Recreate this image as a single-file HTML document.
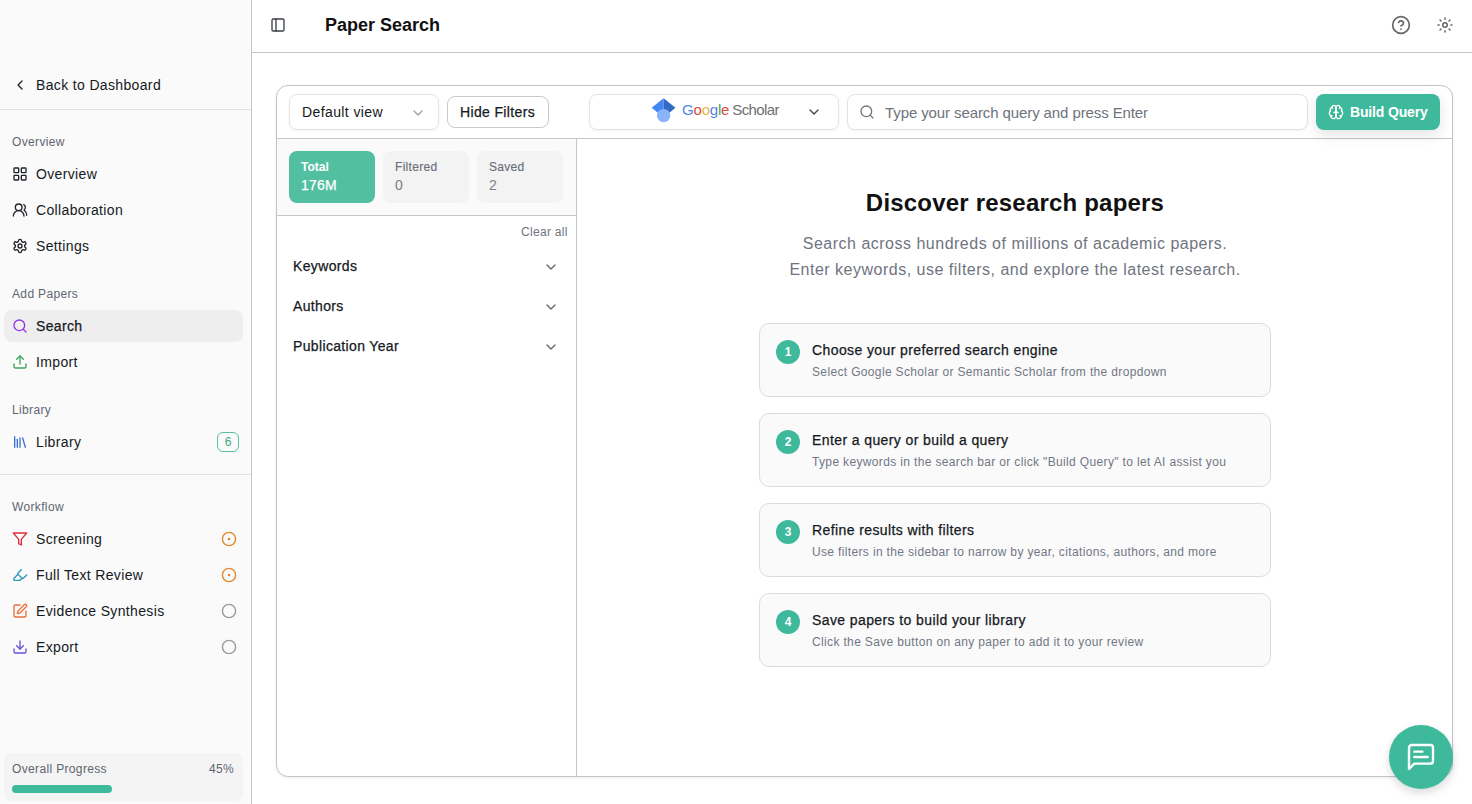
<!DOCTYPE html>
<html><head><meta charset="utf-8">
<style>
*{box-sizing:border-box;margin:0;padding:0}
html,body{width:1472px;height:804px;overflow:hidden;background:#fff;font-family:"Liberation Sans",sans-serif;color:#151922}
.abs{position:absolute}
.med{-webkit-text-stroke:.25px currentColor}
svg{display:block}
.ic{position:absolute;fill:none;stroke:currentColor;stroke-width:2;stroke-linecap:round;stroke-linejoin:round}
#sb{position:absolute;left:0;top:0;width:252px;height:804px;background:#fafafa;border-right:1px solid #c6c6c6}
.t{position:absolute;white-space:nowrap;line-height:1}
.lbl{font-size:12px;color:#5f6672;letter-spacing:.35px}
.itm{font-size:14px;color:#151922;letter-spacing:.35px}
.hr{position:absolute;left:0;width:251px;height:1px;background:#e2e2e2}
#hd{position:absolute;left:252px;top:0;width:1220px;height:53px;border-bottom:1px solid #c6c6c6;background:#fff}
#card{position:absolute;left:276px;top:85px;width:1177px;height:692px;border:1px solid #c4c4c4;border-radius:12px;background:#fff;box-shadow:0 1px 3px rgba(0,0,0,.07);overflow:hidden}
.box{position:absolute;border:1px solid #e3e3e3;border-radius:8px;background:#fff;box-shadow:0 1px 2px rgba(0,0,0,.05)}
.stat{position:absolute;top:12px;width:86px;height:52px;border-radius:8px;background:#f3f3f3}
.step{position:absolute;left:181px;width:512px;height:74px;border:1px solid #dcdcdc;border-radius:10px;background:#fafafa}
.num{position:absolute;left:16px;top:16px;width:24px;height:24px;border-radius:12px;background:#3fb99b;color:#fff;font-size:12px;font-weight:700;text-align:center;line-height:24px}
.st{-webkit-text-stroke:.25px currentColor;position:absolute;left:52px;top:19px;font-size:14px;color:#151922;letter-spacing:.4px;white-space:nowrap;line-height:1}
.sd{position:absolute;left:52px;top:42px;font-size:12px;color:#717784;letter-spacing:.35px;white-space:nowrap;line-height:1}
</style></head><body>

<!-- SIDEBAR -->
<div id="sb">
  <svg class="ic" style="left:12px;top:77px;color:#1f2330" width="16" height="16" viewBox="0 0 24 24"><path d="m15 18-6-6 6-6"/></svg>
  <div class="t itm" style="left:36px;top:78px">Back to Dashboard</div>
  <div class="hr" style="top:109px"></div>

  <div class="t lbl" style="left:12px;top:136px">Overview</div>
  <svg class="ic" style="left:12px;top:166px;color:#1f232b" width="16" height="16" viewBox="0 0 24 24"><rect x="3" y="3" width="7" height="7" rx="1"/><rect x="14" y="3" width="7" height="7" rx="1"/><rect x="14" y="14" width="7" height="7" rx="1"/><rect x="3" y="14" width="7" height="7" rx="1"/></svg>
  <div class="t itm" style="left:36px;top:167px">Overview</div>
  <svg class="ic" style="left:12px;top:202px;color:#1f232b" width="16" height="16" viewBox="0 0 24 24"><path d="M18 21a8 8 0 0 0-16 0"/><circle cx="10" cy="8" r="5"/><path d="M22 20c0-3.37-2-6.5-4-8a5 5 0 0 0-.45-8.3"/></svg>
  <div class="t itm" style="left:36px;top:203px">Collaboration</div>
  <svg class="ic" style="left:12px;top:238px;color:#1f232b" width="16" height="16" viewBox="0 0 24 24"><path d="M12.22 2h-.44a2 2 0 0 0-2 2v.18a2 2 0 0 1-1 1.73l-.43.25a2 2 0 0 1-2 0l-.15-.08a2 2 0 0 0-2.73.73l-.22.38a2 2 0 0 0 .73 2.73l.15.1a2 2 0 0 1 1 1.72v.51a2 2 0 0 1-1 1.74l-.15.09a2 2 0 0 0-.73 2.73l.22.38a2 2 0 0 0 2.73.73l.15-.08a2 2 0 0 1 2 0l.43.25a2 2 0 0 1 1 1.73V20a2 2 0 0 0 2 2h.44a2 2 0 0 0 2-2v-.18a2 2 0 0 1 1-1.73l.43-.25a2 2 0 0 1 2 0l.15.08a2 2 0 0 0 2.73-.73l.22-.39a2 2 0 0 0-.73-2.73l-.15-.08a2 2 0 0 1-1-1.74v-.5a2 2 0 0 1 1-1.74l.15-.09a2 2 0 0 0 .73-2.73l-.22-.38a2 2 0 0 0-2.73-.73l-.15.08a2 2 0 0 1-2 0l-.43-.25a2 2 0 0 1-1-1.73V4a2 2 0 0 0-2-2z"/><circle cx="12" cy="12" r="3"/></svg>
  <div class="t itm" style="left:36px;top:239px">Settings</div>

  <div class="t lbl" style="left:12px;top:288px">Add Papers</div>
  <div class="abs" style="left:4px;top:310px;width:239px;height:32px;border-radius:8px;background:#eeeeee"></div>
  <svg class="ic" style="left:12px;top:318px;color:#9333ea" width="16" height="16" viewBox="0 0 24 24"><circle cx="11" cy="11" r="8"/><path d="m21 21-4.3-4.3"/></svg>
  <div class="t itm med" style="left:36px;top:319px">Search</div>
  <svg class="ic" style="left:12px;top:354px;color:#3aa55d" width="16" height="16" viewBox="0 0 24 24"><path d="M21 15v4a2 2 0 0 1-2 2H5a2 2 0 0 1-2-2v-4"/><polyline points="17 8 12 3 7 8"/><line x1="12" y1="3" x2="12" y2="15"/></svg>
  <div class="t itm" style="left:36px;top:355px">Import</div>

  <div class="t lbl" style="left:12px;top:404px">Library</div>
  <svg class="ic" style="left:12px;top:434px;color:#3b6fd8" width="16" height="16" viewBox="0 0 24 24"><path d="m16 6 4 14"/><path d="M12 6v14"/><path d="M8 8v12"/><path d="M4 4v16"/></svg>
  <div class="t itm" style="left:36px;top:435px">Library</div>
  <div class="abs" style="left:217px;top:432px;width:22px;height:20px;border:1px solid #59bfa3;border-radius:6px;color:#3fa88b;font-size:12px;text-align:center;line-height:18px">6</div>
  <div class="hr" style="top:474px"></div>

  <div class="t lbl" style="left:12px;top:501px">Workflow</div>
  <svg class="ic" style="left:12px;top:531px;color:#dc2f3a" width="16" height="16" viewBox="0 0 24 24"><polygon points="22 3 2 3 10 12.46 10 19 14 21 14 12.46 22 3"/></svg>
  <div class="t itm" style="left:36px;top:532px">Screening</div>
  <svg class="ic" style="left:12px;top:567px;color:#2a98b8" width="16" height="16" viewBox="0 0 24 24"><path d="m9 11-6 6v3h9l3-3"/><path d="m22 12-4.6 4.6a2 2 0 0 1-2.8 0l-5.2-5.2a2 2 0 0 1 0-2.8L14 4"/></svg>
  <div class="t itm" style="left:36px;top:568px">Full Text Review</div>
  <svg class="ic" style="left:12px;top:603px;color:#e8703a" width="16" height="16" viewBox="0 0 24 24"><path d="M12 3H5a2 2 0 0 0-2 2v14a2 2 0 0 0 2 2h14a2 2 0 0 0 2-2v-7"/><path d="M18.375 2.625a1 1 0 0 1 3 3l-9.013 9.014a2 2 0 0 1-.853.505l-2.873.84a.5.5 0 0 1-.62-.62l.84-2.873a2 2 0 0 1 .506-.852z"/></svg>
  <div class="t itm" style="left:36px;top:604px">Evidence Synthesis</div>
  <svg class="ic" style="left:12px;top:639px;color:#6a4fd8" width="16" height="16" viewBox="0 0 24 24"><path d="M21 15v4a2 2 0 0 1-2 2H5a2 2 0 0 1-2-2v-4"/><polyline points="7 10 12 15 17 10"/><line x1="12" y1="15" x2="12" y2="3"/></svg>
  <div class="t itm" style="left:36px;top:640px">Export</div>

  <!-- status circles -->
  <svg class="abs" style="left:220px;top:530px" width="18" height="18" viewBox="0 0 18 18"><circle cx="9" cy="9" r="6.6" fill="none" stroke="#e08a2c" stroke-width="1.4"/><circle cx="9" cy="9" r="1.3" fill="#e08a2c"/></svg>
  <svg class="abs" style="left:220px;top:566px" width="18" height="18" viewBox="0 0 18 18"><circle cx="9" cy="9" r="6.6" fill="none" stroke="#e08a2c" stroke-width="1.4"/><circle cx="9" cy="9" r="1.3" fill="#e08a2c"/></svg>
  <svg class="abs" style="left:220px;top:602px" width="18" height="18" viewBox="0 0 18 18"><circle cx="9" cy="9" r="6.6" fill="none" stroke="#9a9a9a" stroke-width="1.4"/></svg>
  <svg class="abs" style="left:220px;top:638px" width="18" height="18" viewBox="0 0 18 18"><circle cx="9" cy="9" r="6.6" fill="none" stroke="#9a9a9a" stroke-width="1.4"/></svg>

  <div class="abs" style="left:4px;top:753px;width:239px;height:48px;border-radius:8px;background:#f4f4f4"></div>
  <div class="t lbl" style="left:12px;top:763px;color:#60656f">Overall Progress</div>
  <div class="t lbl" style="left:200px;top:763px;width:34px;text-align:right;color:#60656f">45%</div>
  <div class="abs" style="left:12px;top:785px;width:100px;height:8px;border-radius:4px;background:#3fb99b"></div>
</div>

<!-- HEADER -->
<div id="hd">
  <svg class="ic" style="left:18px;top:17px;color:#3a3e48" width="16" height="16" viewBox="0 0 24 24"><rect width="18" height="18" x="3" y="3" rx="2"/><path d="M9 3v18"/></svg>
  <div class="t" style="left:73px;top:16px;font-size:18px;font-weight:700;color:#111">Paper Search</div>
  <svg class="ic" style="left:1139px;top:15px;color:#666;stroke-width:2" width="20" height="20" viewBox="0 0 24 24"><circle cx="12" cy="12" r="10"/><path d="M9.09 9a3 3 0 0 1 5.83 1c0 2-3 3-3 3"/><path d="M12 17h.01"/></svg>
  <svg class="ic" style="left:1184px;top:16px;color:#666" width="18" height="18" viewBox="0 0 24 24"><circle cx="12" cy="12" r="3"/><path d="M12 2.7v1.5"/><path d="M12 19.8v1.5"/><path d="M2.7 12h1.5"/><path d="M19.8 12h1.5"/><path d="m18.6 5.4-1.2 1.2"/><path d="m6.6 17.4-1.2 1.2"/><path d="m5.4 5.4 1.2 1.2"/><path d="m17.4 17.4 1.2 1.2"/></svg>
</div>

<!-- CARD -->
<div id="card">
  <!-- toolbar -->
  <div class="abs" style="left:0;top:0;width:1175px;height:53px;border-bottom:1px solid #c6c6c6"></div>
  <div class="box" style="left:12px;top:8px;width:150px;height:36px">
    <div class="t" style="left:12px;top:10px;font-size:14px;letter-spacing:.4px;color:#151922">Default view</div>
    <svg class="ic" style="left:120px;top:10px;color:#a0a0a0" width="16" height="16" viewBox="0 0 24 24"><path d="m6 9 6 6 6-6"/></svg>
  </div>
  <div class="abs" style="left:170px;top:10px;width:102px;height:32px;border:1px solid #c9c9c9;border-radius:8px;background:#fff">
    <div class="t med" style="left:12px;top:8px;font-size:14px;letter-spacing:.35px;color:#151922">Hide Filters</div>
  </div>
  <div class="box" style="left:312px;top:8px;width:250px;height:36px">
    <svg class="abs" style="left:60px;top:2px" width="28" height="28" viewBox="0 0 28 28">
      <path d="M1.7 10.8 L13.6 1.2 L13.6 20.4 Z" fill="#4285f4"/>
      <path d="M25.5 10.8 L13.6 1.2 L13.6 20.4 Z" fill="#356ac3"/>
      <circle cx="13.6" cy="18.6" r="6.7" fill="#8ab4f8"/>
    </svg>
    <div class="t" style="left:92px;top:7px;font-size:15px;letter-spacing:-.2px"><span style="color:#4f86e6">G</span><span style="color:#db4a3f">o</span><span style="color:#e6b83c">o</span><span style="color:#4f86e6">g</span><span style="color:#3ea35a">l</span><span style="color:#db4a3f">e</span><span style="color:#707070;letter-spacing:-.6px;margin-left:3px">Scholar</span></div>
    <svg class="ic" style="left:216px;top:9px;color:#444" width="16" height="16" viewBox="0 0 24 24"><path d="m6 9 6 6 6-6"/></svg>
  </div>
  <div class="box" style="left:570px;top:8px;width:461px;height:36px">
    <svg class="ic" style="left:11px;top:9px;color:#777" width="16" height="16" viewBox="0 0 24 24"><circle cx="11" cy="11" r="8"/><path d="m21 21-4.3-4.3"/></svg>
    <div class="t" style="left:37px;top:10px;font-size:15px;color:#6e737c;letter-spacing:-.1px">Type your search query and press Enter</div>
  </div>
  <div class="abs" style="left:1039px;top:8px;width:124px;height:36px;border-radius:8px;background:#3fb99b;box-shadow:0 5px 14px rgba(0,0,0,.11)">
    <svg class="ic" style="left:12px;top:10px;color:#fff" width="16" height="16" viewBox="0 0 24 24"><path d="M12 5a3 3 0 1 0-5.997.125 4 4 0 0 0-2.526 5.77 4 4 0 0 0 .556 6.588A4 4 0 1 0 12 18Z"/><path d="M12 5a3 3 0 1 1 5.997.125 4 4 0 0 1 2.526 5.77 4 4 0 0 1-.556 6.588A4 4 0 1 1 12 18Z"/><path d="M15 13a4.5 4.5 0 0 1-3-4 4.5 4.5 0 0 1-3 4"/><path d="M17.599 6.5a3 3 0 0 0 .399-1.375"/><path d="M6.003 5.125A3 3 0 0 0 6.401 6.5"/><path d="M3.477 10.896a4 4 0 0 1 .585-.396"/><path d="M19.938 10.5a4 4 0 0 1 .585.396"/><path d="M6 18a4 4 0 0 1-1.967-.516"/><path d="M19.967 17.484A4 4 0 0 1 18 18"/><path d="M12 18V5"/></svg>
    <div class="t" style="left:34px;top:11px;font-size:14px;font-weight:700;color:#fff;letter-spacing:-.15px">Build Query</div>
  </div>

  <!-- filter panel -->
  <div class="abs" style="left:0;top:53px;width:300px;height:637px;border-right:1px solid #c6c6c6">
    <div class="abs" style="left:0;top:0;width:299px;height:77px;background:#fafafa;border-bottom:1px solid #c6c6c6">
      <div class="stat" style="left:12px;background:#52bfa1">
        <div class="t" style="left:12px;top:10px;font-size:12px;font-weight:700;color:#fff">Total</div>
        <div class="t med" style="left:12px;top:27px;font-size:14px;color:#fff;letter-spacing:.2px">176M</div>
      </div>
      <div class="stat" style="left:106px">
        <div class="t med" style="left:12px;top:10px;font-size:12px;color:#6a6f7a;letter-spacing:.3px;-webkit-text-stroke:.15px currentColor">Filtered</div>
        <div class="t" style="left:12px;top:27px;font-size:14px;color:#7a7f8a">0</div>
      </div>
      <div class="stat" style="left:200px">
        <div class="t med" style="left:12px;top:10px;font-size:12px;color:#6a6f7a;letter-spacing:.3px;-webkit-text-stroke:.15px currentColor">Saved</div>
        <div class="t" style="left:12px;top:27px;font-size:14px;color:#7a7f8a">2</div>
      </div>
    </div>
    <div class="t" style="left:244px;top:87px;font-size:12px;color:#6f7480;letter-spacing:.3px">Clear all</div>
    <div class="t med" style="left:16px;top:120px;font-size:14px;letter-spacing:.35px;color:#151922">Keywords</div>
    <svg class="ic" style="left:266px;top:120px;color:#666" width="16" height="16" viewBox="0 0 24 24"><path d="m6 9 6 6 6-6"/></svg>
    <div class="t med" style="left:16px;top:160px;font-size:14px;letter-spacing:.35px;color:#151922">Authors</div>
    <svg class="ic" style="left:266px;top:160px;color:#666" width="16" height="16" viewBox="0 0 24 24"><path d="m6 9 6 6 6-6"/></svg>
    <div class="t med" style="left:16px;top:200px;font-size:14px;letter-spacing:.35px;color:#151922">Publication Year</div>
    <svg class="ic" style="left:266px;top:200px;color:#666" width="16" height="16" viewBox="0 0 24 24"><path d="m6 9 6 6 6-6"/></svg>
  </div>

  <!-- main -->
  <div class="abs" style="left:301px;top:53px;width:874px;height:637px">
    <div class="t" style="left:0;width:874px;text-align:center;top:52px;font-size:24px;font-weight:700;color:#111;letter-spacing:.2px">Discover research papers</div>
    <div class="t" style="left:0;width:874px;text-align:center;top:92px;font-size:16px;color:#6f7480;letter-spacing:.5px;line-height:26px">Search across hundreds of millions of academic papers.<br>Enter keywords, use filters, and explore the latest research.</div>

    <div class="step" style="top:184px"><div class="num">1</div><div class="st">Choose your preferred search engine</div><div class="sd">Select Google Scholar or Semantic Scholar from the dropdown</div></div>
    <div class="step" style="top:274px"><div class="num">2</div><div class="st">Enter a query or build a query</div><div class="sd">Type keywords in the search bar or click "Build Query" to let AI assist you</div></div>
    <div class="step" style="top:364px"><div class="num">3</div><div class="st">Refine results with filters</div><div class="sd">Use filters in the sidebar to narrow by year, citations, authors, and more</div></div>
    <div class="step" style="top:454px"><div class="num">4</div><div class="st">Save papers to build your library</div><div class="sd">Click the Save button on any paper to add it to your review</div></div>
  </div>
</div>

<!-- FAB -->
<div class="abs" style="left:1389px;top:725px;width:64px;height:64px;border-radius:32px;background:#3fb99b;box-shadow:0 4px 10px rgba(0,0,0,.15)">
  <svg class="ic" style="left:16px;top:16px;color:#fff;stroke-width:1.8" width="32" height="32" viewBox="0 0 24 24"><path d="M21 15a2 2 0 0 1-2 2H7l-4 4V5a2 2 0 0 1 2-2h14a2 2 0 0 1 2 2z"/><path d="M13 8H7"/><path d="M17 12H7"/></svg>
</div>

</body></html>
